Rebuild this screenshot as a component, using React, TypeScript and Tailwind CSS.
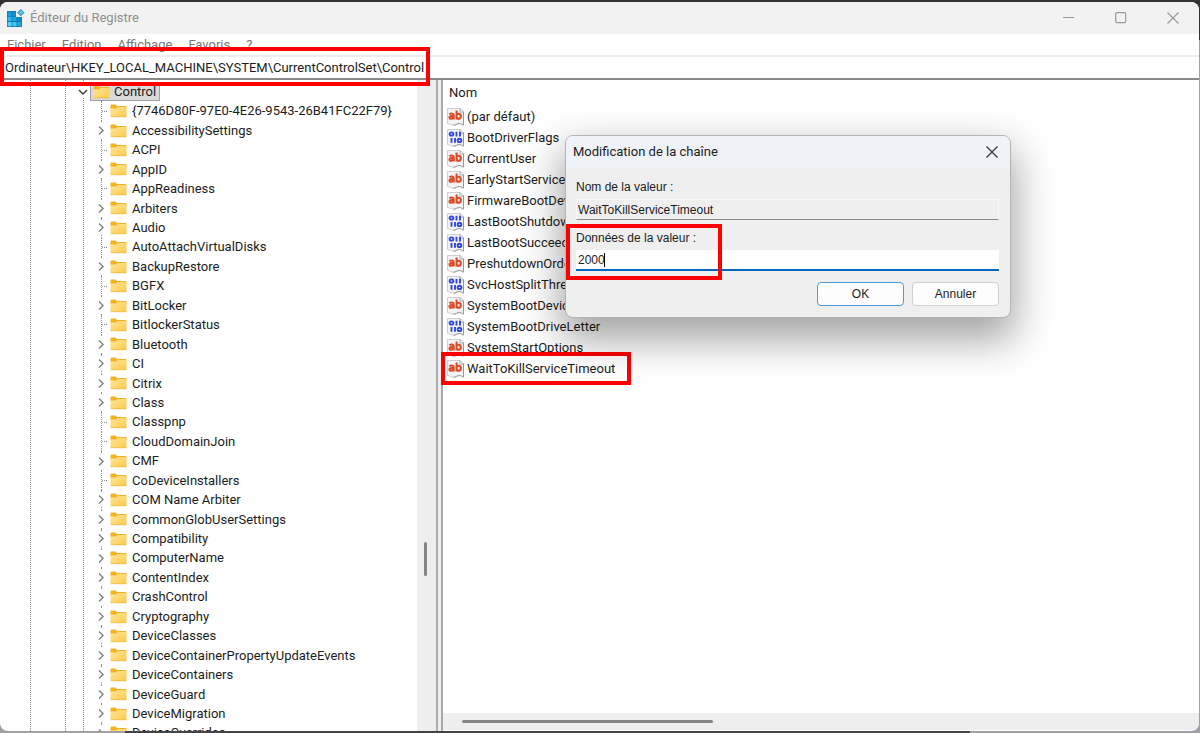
import clsx from "clsx";
import { useState } from "react";

type ValueType = "string" | "binary"

const keys = [
  { name: '{7746D80F-97E0-4E26-9543-26B41FC22F79}', expandable: false },
  { name: 'AccessibilitySettings', expandable: true },
  { name: 'ACPI', expandable: false },
  { name: 'AppID', expandable: true },
  { name: 'AppReadiness', expandable: false },
  { name: 'Arbiters', expandable: true },
  { name: 'Audio', expandable: true },
  { name: 'AutoAttachVirtualDisks', expandable: false },
  { name: 'BackupRestore', expandable: true },
  { name: 'BGFX', expandable: false },
  { name: 'BitLocker', expandable: true },
  { name: 'BitlockerStatus', expandable: false },
  { name: 'Bluetooth', expandable: true },
  { name: 'CI', expandable: true },
  { name: 'Citrix', expandable: true },
  { name: 'Class', expandable: true },
  { name: 'Classpnp', expandable: false },
  { name: 'CloudDomainJoin', expandable: false },
  { name: 'CMF', expandable: true },
  { name: 'CoDeviceInstallers', expandable: false },
  { name: 'COM Name Arbiter', expandable: true },
  { name: 'CommonGlobUserSettings', expandable: true },
  { name: 'Compatibility', expandable: true },
  { name: 'ComputerName', expandable: true },
  { name: 'ContentIndex', expandable: true },
  { name: 'CrashControl', expandable: true },
  { name: 'Cryptography', expandable: true },
  { name: 'DeviceClasses', expandable: true },
  { name: 'DeviceContainerPropertyUpdateEvents', expandable: true },
  { name: 'DeviceContainers', expandable: true },
  { name: 'DeviceGuard', expandable: true },
  { name: 'DeviceMigration', expandable: true },
  { name: 'DeviceOverrides', expandable: true },
]

const values: { name: string; type: ValueType; marked?: boolean }[] = [
  { name: '(par défaut)', type: 'string' },
  { name: 'BootDriverFlags', type: 'binary' },
  { name: 'CurrentUser', type: 'string' },
  { name: 'EarlyStartServices', type: 'string' },
  { name: 'FirmwareBootDevice', type: 'string' },
  { name: 'LastBootShutdown', type: 'binary' },
  { name: 'LastBootSucceeded', type: 'binary' },
  { name: 'PreshutdownOrder', type: 'string' },
  { name: 'SvcHostSplitThreshold', type: 'binary' },
  { name: 'SystemBootDevice', type: 'string' },
  { name: 'SystemBootDriveLetter', type: 'binary' },
  { name: 'SystemStartOptions', type: 'string' },
  { name: 'WaitToKillServiceTimeout', type: 'string', marked: true },
]

const menus = ['Fichier', 'Edition', 'Affichage', 'Favoris', '?']

const RegistryIcon = () => (
  <svg width="18" height="19" viewBox="0 0 18 19" aria-hidden="true">
    <path d="M0 2h9v6h6v10H0z" fill="#0a78b8" />
    <path d="M.7 2.700h4v4.300h-4z" fill="#1c9cd8" />
    <path d="M5.500 2.700h3.300v4.300H5.500z" fill="#1590cc" />
    <path d="M.7 7.800h4v4.300h-4z" fill="#2bb8ea" />
    <path d="M5.500 7.800h4v4.300h-4z" fill="#1fa5de" />
    <path d="M10.300 8.500h4v3.600h-4z" fill="#1288c4" />
    <path d="M.7 13h4v4.300h-4z" fill="#56d3f5" />
    <path d="M5.500 13h4v4.300h-4z" fill="#45c8f0" />
    <path d="M10.300 13h4v4.300h-4z" fill="#23a6dc" />
    <path d="M13.800.3l3.300 3.300-3.300 3.300-3.300-3.300z" fill="#3aa6da" stroke="#2287bb" strokeWidth=".6" />
    <path d="M13.800 1.600l2 2-2 1.400-2-1.400z" fill="#6cc8ee" />
  </svg>
)

const FolderIcon = () => (
  <svg className="shrink-0" width="17" height="14" viewBox="0 0 17 14" aria-hidden="true">
    <defs>
      <linearGradient id="folder" x1="0" y1="0" x2="1" y2="1">
        <stop offset="0" stopColor="#ffe69a" />
        <stop offset="1" stopColor="#fdca48" />
      </linearGradient>
    </defs>
    <path d="M.5 1.500Q.5.500 1.500.500h4L7 2h8.500q1 0 1 1v2H.5z" fill="#f5b21c" />
    <path d="M.5 4.500h5.500L7.500 3h8q1 0 1 1v8.500q0 .5-.5.500H1q-.5 0-.5-.5z" fill="url(#folder)" />
    <path d="M.8 12.800h15.400" stroke="#e9b640" strokeWidth=".6" />
  </svg>
)

const ValueIcon = ({ type }: { type: ValueType }) => (
  <svg className="shrink-0" width="18" height="18" viewBox="0 0 18 18" aria-hidden="true">
    <path d="M.5.500H13L16.500 4v13c-1.500 0-2-1.500-4-1.500-2.500 0-3.500 1.700-6 1.700-2 0-2.500-1-6-1.700z" fill="#f3f3f5" stroke="#cfcfd3" />
    <path d="M13 .5L16.500 4v13c-1.500 0-2-1.500-4-1.500-2.500 0-3.500 1.700-6 1.700" fill="none" stroke="#97979b" />
    <path d="M13 .5V4h3.500" fill="#fff" stroke="#97979b" strokeWidth=".8" />
    {type === 'string' ? (
      <g fill="none" stroke="#dc4a26" strokeWidth="2.100">
        <path d="M2.300 6.200q2.200-1.300 3.700-.3.700.5.700 1.600V11.500M6.600 8.200Q2.500 7.700 2.500 9.600q0 1.400 1.700 1.200 1.900-.2 2.400-1.600" />
        <path d="M9.600 2.500v9M9.600 7q1-1.400 2.400-1.200 1.800.3 1.800 2.500 0 2.300-1.800 2.500-1.400.2-2.400-1.200" />
      </g>
    ) : (
      <g fill="none" stroke="#2f49e0" strokeWidth="1.900">
        <ellipse cx="4.500" cy="5" rx="1.900" ry="1.600" />
        <path d="M9.500 2.700v4.700M13 2.700v4.700M4.500 9v4.700M8 9v4.700" />
        <ellipse cx="12.500" cy="11.400" rx="1.900" ry="1.600" />
      </g>
    )}
  </svg>
)

const CloseIcon = () => (
  <svg width="12" height="12" viewBox="0 0 12 12" fill="none" stroke="currentColor" strokeWidth="1.200" aria-hidden="true">
    <path d="M.5.500l11 11M11.500.500l-11 11" />
  </svg>
)

const TitleBar = () => (
  <header className="flex h-8 shrink-0 items-center bg-[#f2f2f2] pl-[7px]">
    <RegistryIcon />
    <h1 className="ml-[5px] text-[13px] text-[#8e8e8e]">Éditeur du Registre</h1>
    <div className="ml-auto flex h-full text-[#9a9a9a]">
      <button aria-label="Réduire" className="flex w-[52px] items-center justify-center">
        <svg width="12" height="12" viewBox="0 0 12 12" aria-hidden="true"><path d="M0 5.500h11" stroke="currentColor" /></svg>
      </button>
      <button aria-label="Agrandir" className="flex w-[52px] items-center justify-center">
        <svg width="12" height="12" viewBox="0 0 12 12" fill="none" stroke="currentColor" strokeWidth="1.200" aria-hidden="true"><rect x=".7" y=".7" width="10" height="10" rx="1.200" /></svg>
      </button>
      <button aria-label="Fermer" className="flex w-[52px] items-center justify-center">
        <CloseIcon />
      </button>
    </div>
  </header>
)

const KeyTree = () => (
  <div className="relative flex min-w-0 flex-1 flex-col overflow-hidden pt-[2px]">
    {/* guides of the parent levels */}
    <div className="absolute inset-y-0 left-[30px] w-9 border-x border-dotted border-[#909090]" />
    <div className="absolute inset-y-0 left-[83px] border-l border-dotted border-[#909090]" />

    <ul role="tree" aria-label="Clés" className="relative -mb-3 flex flex-1 flex-col">
      <li role="treeitem" aria-expanded="true" aria-selected="true" className="flex min-h-[19px] flex-1 basis-0 items-center pl-[77px]">
        <button aria-label="Réduire Control" className="bg-white">
          <svg width="12" height="12" viewBox="0 0 12 12" fill="none" stroke="#404040" strokeWidth="1.500" aria-hidden="true"><path d="M2 4l4 4 4-4" /></svg>
        </button>
        <span className="ml-px flex h-[19px] items-center gap-1 border border-[#a0a0a0] bg-[#d9d9d9] pr-[3px] pl-[2px]">
          <FolderIcon />
          <span className="leading-4">Control</span>
        </span>
      </li>
      {keys.map((key) => (
        <li
          key={key.name}
          role="treeitem"
          aria-expanded={key.expandable ? false : undefined}
          className="relative flex min-h-[19px] flex-1 basis-0 items-center pl-[95px]"
        >
          <div className="absolute inset-y-0 left-[101px] border-l border-dotted border-[#909090]" />
          {key.expandable ? (
            <button aria-label={`Développer ${key.name}`} className="relative bg-white">
              <svg width="12" height="15" viewBox="0 0 12 15" fill="none" stroke="#808080" strokeWidth="1.400" aria-hidden="true"><path d="M4 3.500l4 4-4 4" /></svg>
            </button>
          ) : (
            <div className="ml-[7px] w-[5px] border-t border-dotted border-[#909090]" />
          )}
          <span className="ml-[3px] flex items-center gap-[5px] whitespace-nowrap">
            <FolderIcon />
            {key.name}
          </span>
        </li>
      ))}
    </ul>
  </div>
)

const ValueList = () => (
  <div className="flex-1 pl-[4px]">
    <table className="w-full border-collapse text-left">
      <thead>
        <tr>
          <th className="h-[26px] p-0 pl-[2px] font-normal">Nom</th>
        </tr>
      </thead>
      <tbody>
        {values.map((value) => (
          <tr key={value.name}>
            <td className="h-[21px] p-0">
              <div className="relative flex w-[178px] items-center gap-[2px] leading-[21px] whitespace-nowrap">
                <ValueIcon type={value.type} />
                {value.name}
                {value.marked && <span className="absolute -inset-[6px] border-4 border-[#ff0000]" />}
              </div>
            </td>
          </tr>
        ))}
      </tbody>
    </table>
  </div>
)

const EditDialog = () => {
  const [data, setData] = useState('2000')

  return (
    <div
      role="dialog"
      aria-labelledby="dialog-title"
      className="absolute top-[135px] left-[565px] z-20 w-[446px] overflow-hidden rounded-lg border border-[#b4b4b4] bg-[#efefef] font-['Liberation_Sans',sans-serif] text-xs text-[#1c1c1c] shadow-[0_18px_40px_4px_rgba(0,0,0,0.36)]"
    >
      <div className="flex h-8 items-center justify-between bg-[#f0f2f9] pr-3 pl-[7px]">
        <h2 id="dialog-title" className="font-['Roboto','Open_Sans',sans-serif] text-[13px]">Modification de la chaîne</h2>
        <button aria-label="Fermer" className="text-[#333]"><CloseIcon /></button>
      </div>
      <form className="pt-[11px] pr-[11px] pb-[11px] pl-[10px]" onSubmit={(e) => e.preventDefault()}>
        <label htmlFor="value-name" className="block leading-4">Nom de la valeur :</label>
        <input
          id="value-name"
          readOnly
          value="WaitToKillServiceTimeout"
          className="mt-1 block h-[21px] w-full border border-[#f8f8f8] border-b-[#8a8a8a] px-px outline-none"
        />
        <div className="relative mt-[10px]">
          <label htmlFor="value-data" className="block leading-4">Données de la valeur :</label>
          <input
            id="value-data"
            value={data}
            onChange={(e) => setData(e.target.value)}
            className="mt-1 block h-[21px] w-full border-b-2 border-[#0067c0] bg-white px-[2px] outline-none"
          />
          <span className="absolute bottom-1 left-7 h-[14px] w-px bg-black" />
          <span className="absolute -top-[6px] -bottom-[9px] -left-[10px] w-[156px] border-4 border-[#ff0000]" />
        </div>
        <div className="mt-[11px] flex justify-end gap-2">
          <button type="submit" className="h-6 w-[87px] rounded border border-[#4a9cdc] bg-[#fdfdfd]">OK</button>
          <button type="button" className="h-6 w-[87px] rounded border border-[#d0d0d0] bg-[#fdfdfd]">Annuler</button>
        </div>
      </form>
    </div>
  )
}

const App = () => {
  return (
    <div className="relative h-screen overflow-hidden bg-[linear-gradient(#333_40px,transparent_40px),linear-gradient(to_right,#a0a0a0_125px,#444_125px,#444_970px,#a0a0a4_970px)] pt-[2px] pr-px pb-[2px] font-['Roboto','Open_Sans',sans-serif] text-[13px] text-[#1c1c1c]">
      <div className="flex h-full flex-col overflow-hidden rounded-lg bg-white">
        <TitleBar />
        <nav className="flex h-[21px] shrink-0 items-center gap-4 pl-[7px] text-[#777]">
          {menus.map((menu) => (
            <button key={menu} className={clsx('leading-4', menu === '?' && 'pr-4')}>{menu}</button>
          ))}
        </nav>
        <div className="relative z-10 h-[25px] shrink-0 border-t-2 border-b-2 border-t-[#eee] border-b-[#8a8a8a]">
          <input
            aria-label="Adresse"
            defaultValue="Ordinateur\HKEY_LOCAL_MACHINE\SYSTEM\CurrentControlSet\Control"
            className="block h-[21px] w-full px-[5px] outline-none"
          />
          <span className="absolute -top-[10px] -bottom-2 left-0 w-[430px] border-4 border-[#ff0000]" />
        </div>

        <main className="flex min-h-0 flex-1">
          <section className="flex w-[438px] shrink-0 border-r-2 border-[#a9a9b0]">
            <KeyTree />
            <div className="relative w-[19px] bg-[#eee]">
              <div className="absolute top-[71%] right-[9px] h-[34px] w-[3px] rounded-full bg-[#858585]" />
            </div>
          </section>
          <div className="w-[3px] shrink-0 bg-[#eee]" />
          <section className="flex min-w-0 flex-1 flex-col border-l-2 border-[#a9a9b0]">
            <ValueList />
            <div className="mb-px flex h-[17px] shrink-0 items-center bg-[#eee] pl-[19px]">
              <div className="h-[3px] w-[34%] rounded-full bg-[#858585]" />
            </div>
          </section>
        </main>
      </div>
      <EditDialog />
    </div>
  )
}

export default App
